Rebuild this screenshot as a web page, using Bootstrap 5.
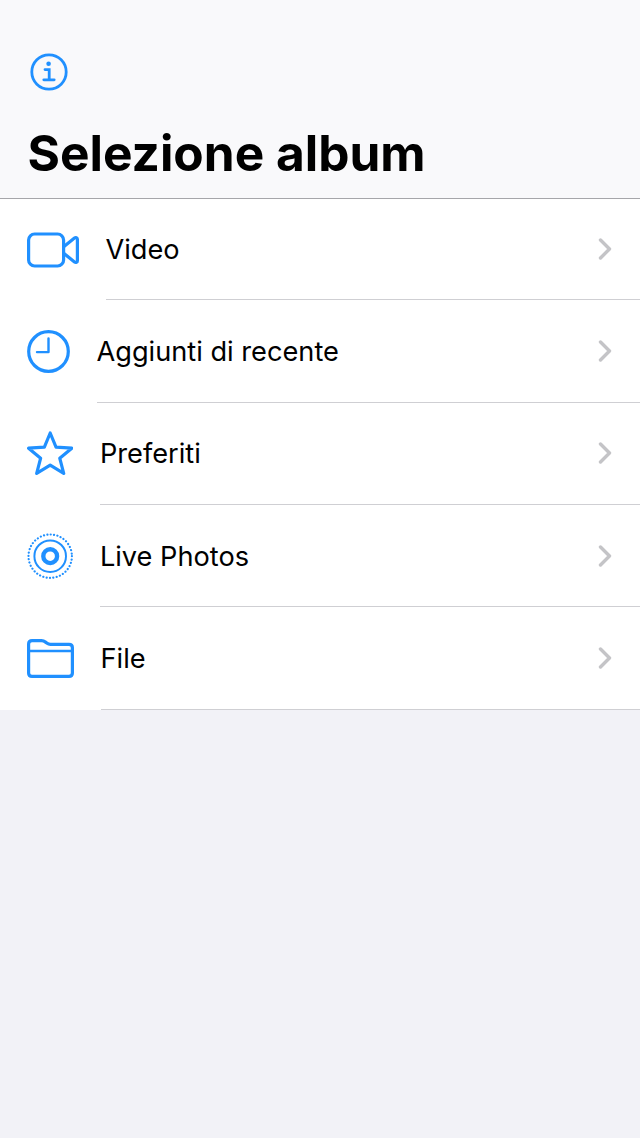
<!DOCTYPE html>
<html lang="it">
<head>
    <meta charset="UTF-8">
    <title>Selezione album</title>
    <meta name="viewport" content="width=device-width, initial-scale=1">
    <link href="https://cdn.jsdelivr.net/npm/bootstrap@5.3.0/dist/css/bootstrap.min.css" rel="stylesheet">
    <style>
        body { background: #f2f2f7; font-family: Inter, "Liberation Sans", sans-serif; color: #000; }
        .album-head { height: 199px; background: #f9f9fb; border-bottom: 1px solid #a6a6aa; padding: 53px 0 0 27.5px; }
        .album-head svg { display: block; margin-left: 2px; }
        .album-title { font-size: 49.6px; font-weight: 700; line-height: 58px; margin: 33px 0 0; font-family: Inter, "Liberation Sans", sans-serif; }
        .album-list { background: #fff; }
        .album-row { height: 102.4px; padding-left: 27px; color: #000; text-decoration: none; }
        .album-row:first-child { height: 101.3px; }
        .album-row svg.ico { flex: none; fill: none; stroke: #2090ff; stroke-width: 3.2; stroke-linejoin: round; stroke-linecap: round; }
        .album-body { margin-left: 26.5px; border-bottom: 1px solid #cfcfd3; font-size: 27.2px; padding-right: 28px; }
        .album-label { padding-top: 3px; }
        .album-chev { fill: none; stroke: #c4c4c7; stroke-width: 3.4; stroke-linecap: round; stroke-linejoin: round; }
    </style>
</head>
<body>
<header class="album-head">
    <svg width="38" height="38" viewBox="0 0 38 38" fill="none" stroke="#2090ff" stroke-width="2.8" stroke-linecap="round">
        <circle cx="19" cy="19" r="17.2"/>
        <circle cx="18.6" cy="10.8" r="2.3" fill="#2090ff" stroke="none"/>
        <path d="M15 16.6h4.2v10.2M13.8 26.8h10.4"/>
    </svg>
    <h1 class="album-title">Selezione album</h1>
</header>

<div class="album-list">
    <a href="#" class="album-row d-flex align-items-stretch">
        <svg class="ico align-self-center" width="52" height="36" viewBox="0 0 52 36">
            <rect x="1.6" y="2" width="35" height="32" rx="6"/>
            <path d="M37 14.6 47.5 6c1.3-1 2.9-.3 2.9 1.3v21.4c0 1.6-1.6 2.3-2.9 1.3L37 21.4"/>
        </svg>
        <div class="album-body flex-grow-1 d-flex align-items-center justify-content-between">
            <span class="album-label">Video</span>
            <svg class="album-chev" width="14" height="22" viewBox="0 0 14 22"><path d="M2.5 2 11.5 11l-9 9"/></svg>
        </div>
    </a>
    <a href="#" class="album-row d-flex align-items-stretch">
        <svg class="ico align-self-center" width="43" height="43" viewBox="0 0 43 43">
            <circle cx="21.5" cy="21.5" r="19.8"/>
            <path d="M21.5 8.5v13.6H10" stroke-width="2.4"/>
        </svg>
        <div class="album-body flex-grow-1 d-flex align-items-center justify-content-between">
            <span class="album-label">Aggiunti di recente</span>
            <svg class="album-chev" width="14" height="22" viewBox="0 0 14 22"><path d="M2.5 2 11.5 11l-9 9"/></svg>
        </div>
    </a>
    <a href="#" class="album-row d-flex align-items-stretch">
        <svg class="ico align-self-center" width="46.4" height="46.4" viewBox="0 0 47 47">
            <path d="M23.5 2 29.4 16.4 45.4 17.4 33.2 27.6 37.2 43 23.5 34.6 9.8 43 13.8 27.6 1.6 17.4 17.6 16.4Z"/>
        </svg>
        <div class="album-body flex-grow-1 d-flex align-items-center justify-content-between">
            <span class="album-label">Preferiti</span>
            <svg class="album-chev" width="14" height="22" viewBox="0 0 14 22"><path d="M2.5 2 11.5 11l-9 9"/></svg>
        </div>
    </a>
    <a href="#" class="album-row d-flex align-items-stretch">
        <svg class="ico align-self-center" width="46.4" height="46.4" viewBox="0 0 47 47">
            <circle cx="23.5" cy="23.5" r="22" stroke-width="2.2" stroke-dasharray="0.1 3.35"/>
            <circle cx="23.5" cy="23.5" r="16" stroke-width="2"/>
            <circle cx="23.5" cy="23.5" r="7" stroke-width="4.4"/>
        </svg>
        <div class="album-body flex-grow-1 d-flex align-items-center justify-content-between">
            <span class="album-label">Live Photos</span>
            <svg class="album-chev" width="14" height="22" viewBox="0 0 14 22"><path d="M2.5 2 11.5 11l-9 9"/></svg>
        </div>
    </a>
    <a href="#" class="album-row d-flex align-items-stretch">
        <svg class="ico align-self-center" width="47" height="39" viewBox="0 0 47 39">
            <path d="M5 1.7h9.5c1.7 0 2.8.5 4 1.4l1.6 1.2c1 .8 2 1.1 3.4 1.1H42c2.2 0 3.4 1.2 3.4 3.4V34c0 2.2-1.2 3.4-3.4 3.4H5c-2.2 0-3.4-1.2-3.4-3.4V5c0-2.2 1.2-3.3 3.4-3.3Z"/>
            <path d="M1.6 12h43.8" stroke-width="2.4"/>
        </svg>
        <div class="album-body flex-grow-1 d-flex align-items-center justify-content-between">
            <span class="album-label">File</span>
            <svg class="album-chev" width="14" height="22" viewBox="0 0 14 22"><path d="M2.5 2 11.5 11l-9 9"/></svg>
        </div>
    </a>
</div>
<script src="https://cdn.jsdelivr.net/npm/bootstrap@5.3.0/dist/js/bootstrap.bundle.min.js"></script>
</body>
</html>
